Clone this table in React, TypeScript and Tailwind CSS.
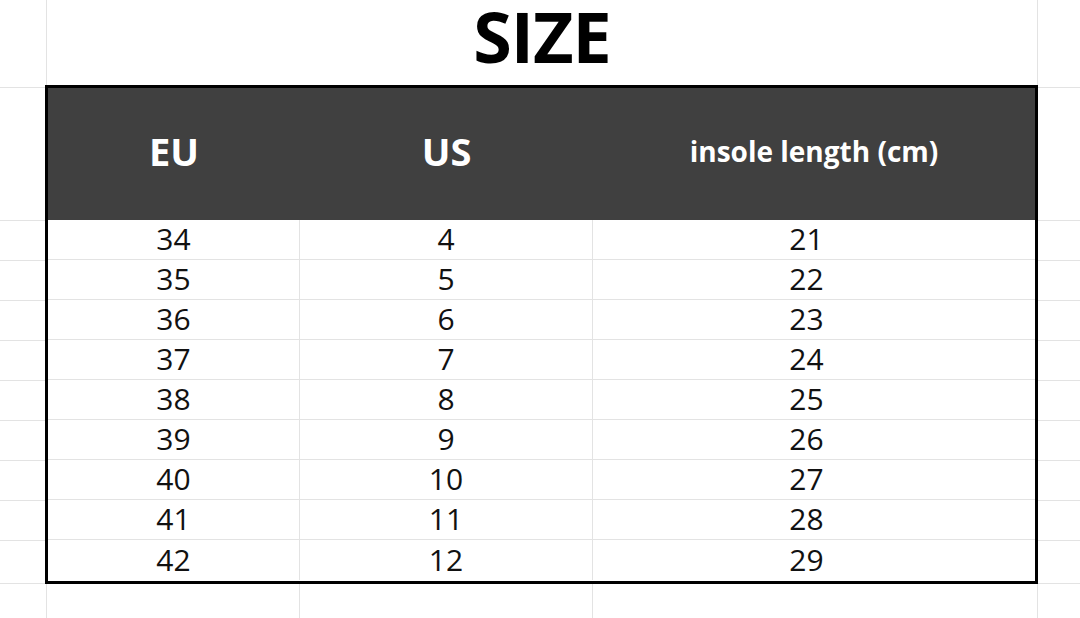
const rows: [string, string, string][] = [
  ["34", "4", "21"],
  ["35", "5", "22"],
  ["36", "6", "23"],
  ["37", "7", "24"],
  ["38", "8", "25"],
  ["39", "9", "26"],
  ["40", "10", "27"],
  ["41", "11", "28"],
  ["42", "12", "29"],
];

function Gutter({ width }: { width: string }) {
  return (
    <div className={`${width} mt-[2px] flex shrink-0 flex-col border-t border-[#e3e3e3]`}>
      <div className="h-[133px] border-b border-[#e3e3e3]" />
      {rows.slice(0, 8).map((r) => (
        <div key={r[0]} className="h-[40px] border-b border-[#e3e3e3]" />
      ))}
      <div className="h-[43px] border-b border-[#e3e3e3]" />
    </div>
  );
}

export default function App() {
  return (
    <div
      className="flex h-[618px] w-[1080px] flex-col overflow-hidden bg-white text-black"
      style={{ fontFamily: '"Open Sans", "Noto Sans", sans-serif' }}
    >
      {/* title row */}
      <div className="flex h-[85px] shrink-0">
        <div className="w-[47px] shrink-0 border-r border-[#e3e3e3]" />
        <div className="flex w-[991px] shrink-0 items-end justify-center border-r border-[#e3e3e3] pb-[10px]">
          <h1 className="text-[70px] font-bold leading-[1.1] tracking-[-1px]">SIZE</h1>
        </div>
        <div className="flex-1" />
      </div>

      {/* table row */}
      <div className="flex shrink-0">
        <Gutter width="w-[45px]" />
        <div className="w-[993px] shrink-0 border-[3px] border-black">
          <div className="flex h-[132px] items-center bg-[#404040] pb-[5px] font-bold text-white">
            <div className="w-[252px] text-center text-[38px] leading-tight">EU</div>
            <div className="w-[293px] text-center text-[38px] leading-tight">US</div>
            <div className="flex-1 text-center text-[28px] leading-tight">insole length (cm)</div>
          </div>
          {rows.map((r, i) => (
            <div
              key={r[0]}
              className={`flex h-[40px] text-[30px] leading-none text-[#111] ${
                i < rows.length - 1 ? "border-b border-[#e3e3e3]" : ""
              }`}
            >
              <div className="flex w-[252px] items-center justify-center border-r border-[#e3e3e3] pb-[1px]">{r[0]}</div>
              <div className="flex w-[293px] items-center justify-center border-r border-[#e3e3e3] pb-[1px]">{r[1]}</div>
              <div className="flex flex-1 items-center justify-center pb-[1px] pr-[15px]">{r[2]}</div>
            </div>
          ))}
        </div>
        <Gutter width="flex-1" />
      </div>

      {/* below table */}
      <div className="flex flex-1">
        <div className="w-[47px] shrink-0 border-r border-[#e3e3e3]" />
        <div className="w-[253px] shrink-0 border-r border-[#e3e3e3]" />
        <div className="w-[293px] shrink-0 border-r border-[#e3e3e3]" />
        <div className="w-[445px] shrink-0 border-r border-[#e3e3e3]" />
        <div className="flex-1" />
      </div>
    </div>
  );
}
